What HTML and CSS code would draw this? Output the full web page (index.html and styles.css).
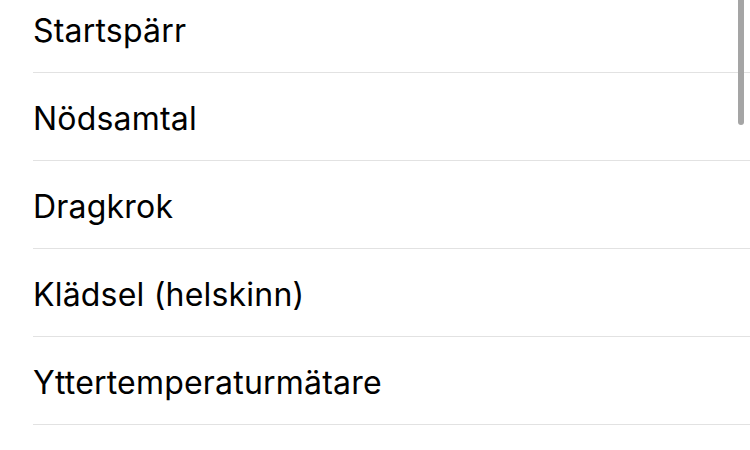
FILE: index.html
```html
<!DOCTYPE html>
<html lang="sv">

<head>
    <meta charset="UTF-8">
    <meta name="viewport" content="width=device-width, initial-scale=1.0">
    <title>Utrustning</title>
    <link rel="stylesheet" href="styles.css">
</head>

<body>
    <div class="list">
        <div class="row"><span class="label">Startspärr</span></div>
        <div class="row"><span class="label">Nödsamtal</span></div>
        <div class="row"><span class="label">Dragkrok</span></div>
        <div class="row"><span class="label">Klädsel (helskinn)</span></div>
        <div class="row"><span class="label">Yttertemperaturmätare</span></div>
    </div>
    <!-- scroll indicator -->
    <div class="scrollbar"></div>
</body>

</html>
```

FILE: styles.css
```css
html,
body {
    margin: 0;
    padding: 0;
    height: 100%;
    overflow: hidden;
}

body {
    font-family: "Inter", "Liberation Sans", sans-serif;
    background-color: #fff;
    color: #000;
}

.list {
    margin-top: -15px;
    padding-left: 33px;
}

.row {
    height: 88px;
    box-sizing: border-box;
    padding-top: 4px;
    border-bottom: 1px solid #e2e2e2;
    display: flex;
    align-items: center;
}

.label {
    font-size: 32px;
    letter-spacing: 0.2px;
}

.scrollbar {
    position: absolute;
    top: 0;
    right: 6px;
    width: 6px;
    height: 125px;
    background-color: #a5a5a5;
    border-radius: 0 0 3px 3px;
}
```
